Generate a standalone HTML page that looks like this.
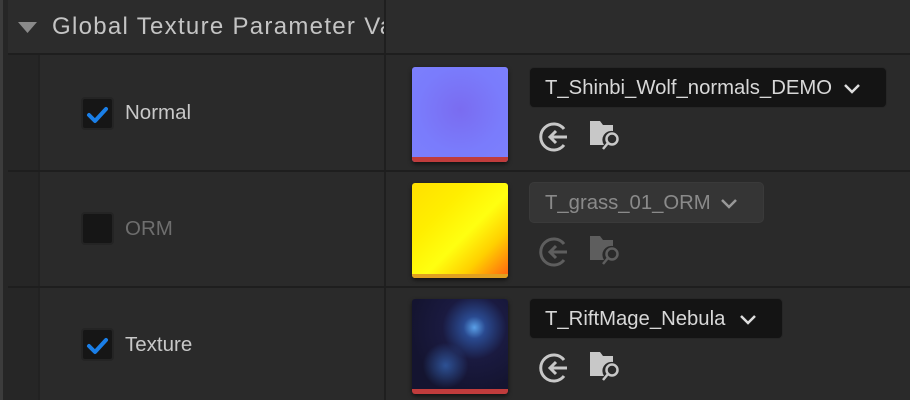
<!DOCTYPE html>
<html><head><style>
*{margin:0;padding:0;box-sizing:border-box}
body{width:910px;height:400px;background:#2a2a2a;position:relative;overflow:hidden;font-family:"Liberation Sans",sans-serif}
.a{position:absolute}
.hl{position:absolute;left:8px;right:0;height:2px;background:#1e1e1e}
.cb{position:absolute;left:81px;width:33px;height:33px;background:#161616;border:2px solid #242424;border-radius:4px}
.lbl{position:absolute;left:125px;font-size:20.5px;color:#c8c8c8}
.th{position:absolute;left:412px;width:96px;height:95px;border-radius:3px;box-shadow:0 2px 4px rgba(0,0,0,.6);overflow:hidden}
.dd{position:absolute;left:529px;height:41px;background:#141414;border:1px solid #262626;border-radius:5px;color:#d8d8d8;font-size:20.3px;padding:9px 0 0 15px;white-space:nowrap}
.dd svg{position:absolute;right:25px;top:15px}
.ic{position:absolute}
</style></head><body>
<div class="a" style="left:0;top:0;width:3px;height:400px;background:#3c3c3c"></div>
<div class="a" style="left:3px;top:0;width:5px;height:400px;background:#262626"></div>
<div class="a" style="left:8px;top:0;width:902px;height:53px;background:#2c2c2c"></div>
<div class="a" style="left:8px;top:55px;width:30px;height:345px;background:#262626"></div>
<div class="a" style="left:38px;top:55px;width:2px;height:345px;background:#222"></div>
<div class="a" style="left:384px;top:0;width:2px;height:400px;background:#1f1f1f"></div>
<div class="hl" style="top:53px"></div>
<div class="hl" style="top:170px"></div>
<div class="hl" style="top:286px"></div>
<svg class="a" style="left:18px;top:22px" width="20" height="12"><path d="M0 0H19L9.5 11Z" fill="#8a8a8a"/></svg>
<div class="a" style="left:52px;top:13px;font-size:24px;letter-spacing:1.3px;color:#c4c4c4;width:332px;overflow:hidden;white-space:nowrap">Global Texture Parameter Values</div>

<div class="cb" style="top:97px"><svg width="29" height="29"><path d="M6 16l6 6 11-12" stroke="#1a7fe8" stroke-width="4" fill="none" stroke-linecap="round" stroke-linejoin="round"/></svg></div>
<div class="lbl" style="top:101px">Normal</div>
<div class="cb" style="top:212px"></div>
<div class="lbl" style="top:217px;color:#6e6e6e">ORM</div>
<div class="cb" style="top:328px"><svg width="29" height="29"><path d="M6 16l6 6 11-12" stroke="#1a7fe8" stroke-width="4" fill="none" stroke-linecap="round" stroke-linejoin="round"/></svg></div>
<div class="lbl" style="top:333px">Texture</div>

<div class="th" style="top:67px;background:radial-gradient(circle at 50% 45%,#7a6cf0,#7a7cfc 60%,#7c80fd)"><div class="a" style="left:0;bottom:0;width:100%;height:5px;background:#c03c3c"></div></div>
<div class="th" style="top:183px;background:linear-gradient(135deg,#ffe000 0%,#ffee00 30%,#ffff10 55%,#ffd000 75%,#ff6010 100%)"><div class="a" style="left:0;bottom:0;width:100%;height:4px;background:#e0a020"></div></div>
<div class="th" style="top:299px;background:radial-gradient(circle at 35% 70%,rgba(60,120,210,.6) 0,rgba(40,80,160,0) 25%),radial-gradient(circle at 65% 30%,#5aa0e8 0,#2a4a90 12%,#1a1a40 35%,#141430 70%),#15152e"><div class="a" style="left:0;bottom:0;width:100%;height:5px;background:#c03c3c"></div></div>

<div class="dd" style="top:67px;width:358px">T_Shinbi_Wolf_normals_DEMO<svg width="18" height="11"><path d="M2 2l7 7 7-7" stroke="#ddd" stroke-width="2.5" fill="none"/></svg></div>
<div class="dd" style="top:182px;width:235px;background:#353535;border-color:#3a3a3a;color:#8a8a8a">T_grass_01_ORM<svg width="18" height="11"><path d="M2 2l7 7 7-7" stroke="#999" stroke-width="2.5" fill="none"/></svg></div>
<div class="dd" style="top:298px;width:254px">T_RiftMage_Nebula<svg width="18" height="11"><path d="M2 2l7 7 7-7" stroke="#ddd" stroke-width="2.5" fill="none"/></svg></div>

<svg class="ic" style="left:538px;top:121px" width="32" height="32"><g fill="none" stroke="#c8c8c8" stroke-width="3"><path d="M26 8A13 13 0 1 0 26 24"/><path d="M12 16H29M18 10l-6 6 6 6"/></g></svg>
<svg class="ic" style="left:589px;top:119px" width="34" height="34"><path d="M1 2h10l3 4h10v6a9 9 0 0 0-9 14H1z" fill="#c8c8c8"/><circle cx="23" cy="20" r="5.5" stroke="#c8c8c8" stroke-width="2.5" fill="none"/><path d="M19 24l-5 6" stroke="#c8c8c8" stroke-width="2.5"/></svg>
<svg class="ic" style="left:538px;top:236px" width="32" height="32"><g fill="none" stroke="#5e5e5e" stroke-width="3"><path d="M26 8A13 13 0 1 0 26 24"/><path d="M12 16H29M18 10l-6 6 6 6"/></g></svg>
<svg class="ic" style="left:589px;top:234px" width="34" height="34"><path d="M1 2h10l3 4h10v6a9 9 0 0 0-9 14H1z" fill="#5e5e5e"/><circle cx="23" cy="20" r="5.5" stroke="#5e5e5e" stroke-width="2.5" fill="none"/><path d="M19 24l-5 6" stroke="#5e5e5e" stroke-width="2.5"/></svg>
<svg class="ic" style="left:538px;top:352px" width="32" height="32"><g fill="none" stroke="#c8c8c8" stroke-width="3"><path d="M26 8A13 13 0 1 0 26 24"/><path d="M12 16H29M18 10l-6 6 6 6"/></g></svg>
<svg class="ic" style="left:589px;top:350px" width="34" height="34"><path d="M1 2h10l3 4h10v6a9 9 0 0 0-9 14H1z" fill="#c8c8c8"/><circle cx="23" cy="20" r="5.5" stroke="#c8c8c8" stroke-width="2.5" fill="none"/><path d="M19 24l-5 6" stroke="#c8c8c8" stroke-width="2.5"/></svg>
</body></html>
